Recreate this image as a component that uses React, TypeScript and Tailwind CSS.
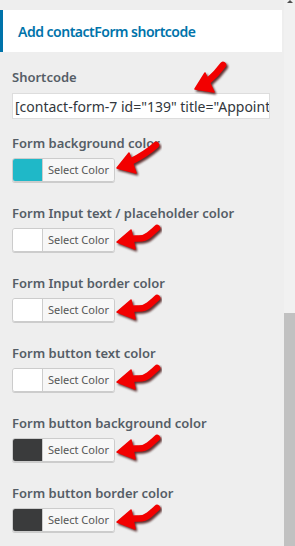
import React from "react";

type Variant = "steep" | "flat" | "short";

function Arrow({ variant }: { variant: Variant }) {
  const shaft =
    variant === "flat"
      ? "M14 22 C 22 20, 26 24, 33 18 S 40 12, 41 11"
      : variant === "short"
      ? "M13 21 C 19 16, 24 11, 29 4"
      : "M14 22 C 22 18, 30 14, 40 5";
  const head =
    variant === "flat" ? "1,25 15,13 19,32" : variant === "short" ? "1,28 11,12 20,31" : "1,28 13,13 20,33";
  return (
    <svg width="46" height="38" viewBox="0 0 46 38" className="block">
      <defs>
        <filter id="blur" x="-20%" y="-20%" width="140%" height="140%">
          <feGaussianBlur stdDeviation="1" />
        </filter>
      </defs>
      <g transform="translate(1.5,1.8)" filter="url(#blur)" opacity="0.8">
        <path d={shaft} stroke="#3a0000" strokeWidth="7" fill="none" strokeLinecap="round" />
        <polygon points={head} fill="#3a0000" strokeLinejoin="round" stroke="#3a0000" strokeWidth="1.5" />
      </g>
      <path d={shaft} stroke="#f20000" strokeWidth="6.5" fill="none" strokeLinecap="round" />
      <polygon points={head} fill="#f20000" stroke="#f20000" strokeWidth="1.5" strokeLinejoin="round" />
    </svg>
  );
}

function ColorRow({ label, color, flat, first }: { label: string; color: string; flat?: boolean; first?: boolean }) {
  return (
    <div className={first ? "relative" : "relative mt-[22px]"}>
      <div className="h-[18px] leading-[18px] text-[13px] font-semibold text-[#555d66] whitespace-nowrap">{label}</div>
      <div className="mt-[6px] flex h-6 w-[103px] rounded-[3px] border border-[#cccccc] overflow-hidden shadow-[0_1px_0_#cccccc]">
        <div className="w-[30px] h-full border-r border-[#cccccc]" style={{ backgroundColor: color }} />
        <div className="flex-1 bg-[#f7f7f7] flex items-center justify-center text-[11px] text-[#555555]">Select Color</div>
      </div>
      <div className={flat ? "absolute left-[104px] top-[13px]" : "absolute left-[104px] top-[6px]"}>
        <Arrow variant={flat ? "flat" : "steep"} />
      </div>
    </div>
  );
}

export default function App() {
  return (
    <div className="w-[295px] h-[546px] bg-[#eeeeee] flex overflow-hidden" style={{ fontFamily: '"Noto Sans", "Open Sans", sans-serif' }}>
      <div className="w-[284px] flex flex-col">
        <div className="mt-[10px] mr-[2px] h-[42px] bg-white border-l-[3px] border-[#0073aa] flex items-center pl-[15px]">
          <span className="text-[14px] font-semibold tracking-[-0.5px] text-[#0073aa] whitespace-nowrap">Add contactForm shortcode</span>
        </div>
        <div className="pl-3 pt-4">
          <div className="relative">
            <div className="h-[18px] leading-[18px] text-[13px] font-semibold text-[#555d66]">Shortcode</div>
            <div className="mt-[7px] h-[26px] w-[258px] bg-white border border-[#dddddd] flex items-center pl-[2px] overflow-hidden">
              <span className="text-[14px] text-[#32373c] whitespace-nowrap">[contact-form-7 id="139" title="Appoint</span>
            </div>
            <div className="absolute left-[182px] top-[-7px]">
              <Arrow variant="short" />
            </div>
          </div>
          <div className="mt-[15px]">
            <ColorRow first label="Form background color" color="#1fb8c8" />
            <ColorRow flat label="Form Input text / placeholder color" color="#ffffff" />
            <ColorRow flat label="Form Input border color" color="#ffffff" />
            <ColorRow flat label="Form button text color" color="#ffffff" />
            <ColorRow flat label="Form button background color" color="#3a3b3c" />
            <ColorRow flat label="Form button border color" color="#3a3b3c" />
          </div>
        </div>
      </div>
      <div className="w-[11px] bg-[#f1f1f1] flex flex-col">
        <div className="h-0 w-0 ml-[3px] border-l-[3px] border-r-[3px] border-b-[3px] border-l-transparent border-r-transparent border-b-[#505050]" />
        <div className="flex-1" />
        <div className="h-[233px] bg-[#c1c1c1]" />
      </div>
    </div>
  );
}
